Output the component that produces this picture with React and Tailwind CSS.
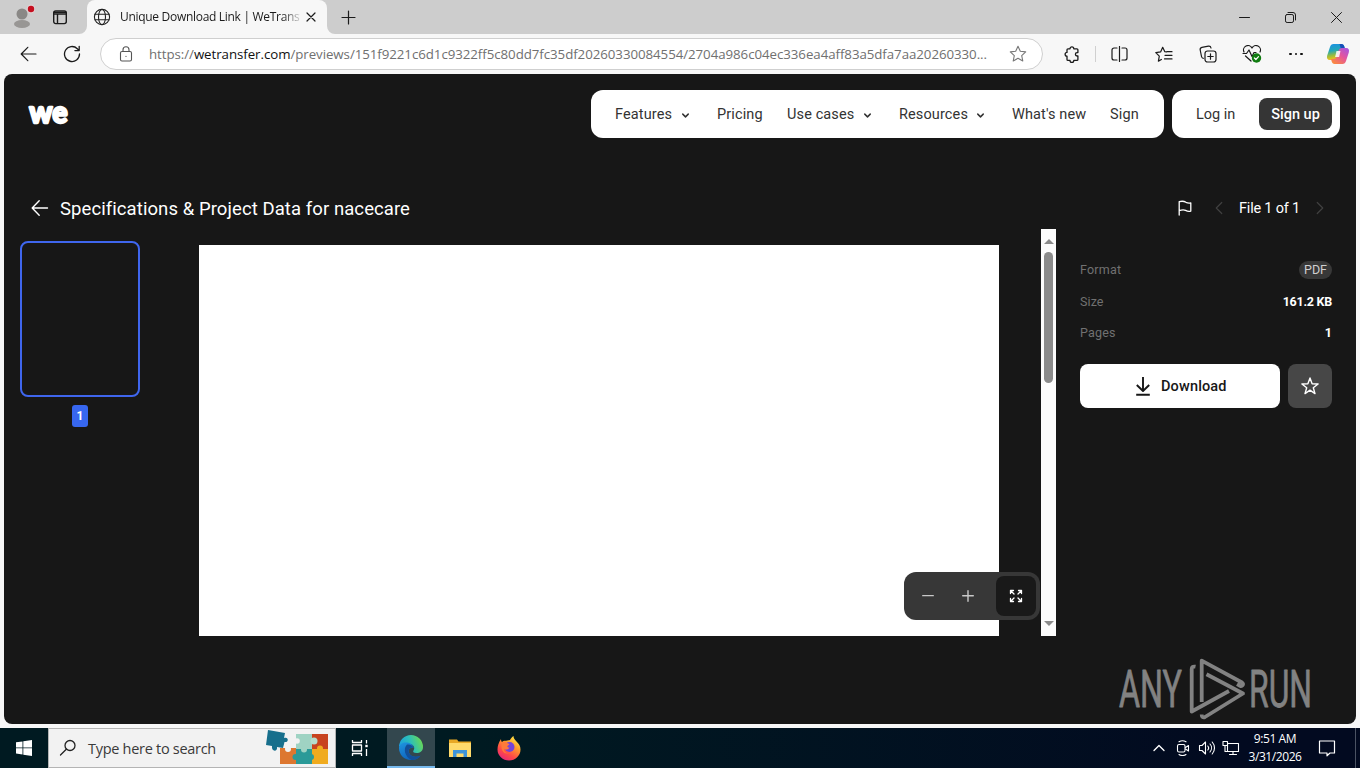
import React from 'react';
import { ChevronDown, ChevronLeft, ChevronRight, ChevronUp } from 'lucide-react';

const SEGOE = "font-['Open_Sans','Noto_Sans',sans-serif]";
const GROTESK = "font-['Roboto','Inter',sans-serif]";

// Thin line icon, one unit per pixel
function Line({ w = 20, h = 20, sw = 1.2, className = '', children }) {
  return (
    <svg
      width={w}
      height={h}
      viewBox={`0 0 ${w} ${h}`}
      fill="none"
      stroke="currentColor"
      strokeWidth={sw}
      strokeLinecap="round"
      strokeLinejoin="round"
      className={`shrink-0 ${className}`}
    >
      {children}
    </svg>
  );
}

function TabBar() {
  return (
    <div className="flex h-[34px] bg-[#cdcdcd] text-[#1b1b1b]">
      <div className="flex w-[43px] items-center justify-end pr-2">
        <svg width="26" height="26" viewBox="0 0 26 26">
          <circle cx="13" cy="10" r="5.5" fill="#8a8886" />
          <ellipse cx="13" cy="20" rx="8" ry="4" fill="#989694" />
          <circle cx="22" cy="5" r="4.4" fill="#e0d2d3" />
          <circle cx="22" cy="5" r="3.2" fill="#c50f1f" />
        </svg>
      </div>
      <div className="flex w-[44px] items-center pl-[9px]">
        <Line w={16} h={16} sw={1.4}>
          <rect x="1.7" y="2" width="12.6" height="12.6" rx="2" />
          <path d="M2 3.4h12M2 5h12M5.5 5v9" />
        </Line>
      </div>
      <div className="relative flex w-[240px] items-center rounded-t-lg bg-[#f7f7f7]">
        <svg className="absolute bottom-0 -left-2" width="8" height="8" viewBox="0 0 8 8">
          <path d="M8 0v8H0a8 8 0 0 0 8-8z" fill="#f7f7f7" />
        </svg>
        <svg className="absolute -right-2 bottom-0" width="8" height="8" viewBox="0 0 8 8">
          <path d="M0 0v8h8a8 8 0 0 1-8-8z" fill="#f7f7f7" />
        </svg>
        <Line w={18} h={18} sw={1.1} className="ml-[6px] text-[#222]">
          <circle cx="9" cy="9" r="7.6" />
          <ellipse cx="9" cy="9" rx="3.5" ry="7.6" />
          <path d="M2 6.3h14M2 11.7h14" />
        </Line>
        <span
          className={`${SEGOE} ml-[9px] w-[180px] text-[12px] leading-5 tracking-[-0.3px] whitespace-nowrap mask-linear-90 mask-linear-from-90% mask-linear-to-102%`}
        >
          Unique Download Link | WeTransf
        </span>
        <Line w={10} h={10} className="ml-[6px]">
          <path d="M1 1l8 8M9 1l-8 8" />
        </Line>
      </div>
      <div className="flex flex-1 items-center pl-[14px]">
        <Line w={15} h={15} sw={1.2}>
          <path d="M7.5 1v13M1 7.5h13" />
        </Line>
      </div>
      <div className="flex w-[138px] items-center">
        <div className="flex w-[46px] justify-center">
          <Line w={12} h={11} sw={1}>
            <path d="M.5 5.5h10" />
          </Line>
        </div>
        <div className="flex w-[46px] justify-center">
          <Line w={12} h={11} sw={1}>
            <rect x=".5" y="2.5" width="8" height="8" rx="1.6" />
            <path d="M3 .5h5a2.5 2.5 0 0 1 2.5 2.5v5" />
          </Line>
        </div>
        <div className="flex w-[46px] justify-center">
          <Line w={12} h={11} sw={1}>
            <path d="M.5.5l10 10M10.5.5l-10 10" />
          </Line>
        </div>
      </div>
    </div>
  );
}

function CopilotLogo() {
  return (
    <svg width="24" height="24" viewBox="0 0 24 24">
      <defs>
        <linearGradient id="cpA" x1="0" y1="0" x2="0.2" y2="1">
          <stop offset="0" stopColor="#1b8fe8" />
          <stop offset="0.45" stopColor="#22a7b8" />
          <stop offset="0.75" stopColor="#9bbd3c" />
          <stop offset="1" stopColor="#f5c01b" />
        </linearGradient>
        <linearGradient id="cpB" x1="1" y1="0" x2="0.2" y2="1">
          <stop offset="0" stopColor="#9f55e8" />
          <stop offset="0.5" stopColor="#e5549c" />
          <stop offset="1" stopColor="#fb8b3f" />
        </linearGradient>
      </defs>
      <path d="M7.5 2h8c1.6 0 2.3 1 2.8 2.5L19 7h-2.5c-1.8 0-2.9 1-3.4 2.7l-1.7 5.5C10.8 17 9.8 18 8 18H4c-2.7 0-3.5-2-2.8-4.5L4 5c.6-2 1.7-3 3.5-3z" fill="url(#cpA)" />
      <path d="M13.5 2h2c1.6 0 2.3 1 2.8 2.5L19 7h-4z" fill="#174fb8" />
      <path d="M16.5 22h-8c-1.6 0-2.3-1-2.8-2.5L5 17h2.5c1.8 0 2.9-1 3.4-2.7l1.7-5.5C13.2 7 14.2 6 16 6h4c2.7 0 3.5 2 2.8 4.5L20 19c-.6 2-1.7 3-3.5 3z" fill="url(#cpB)" />
      <path d="M10.5 9h4l-1.4 6h-4z" fill="#fff" opacity=".85" />
    </svg>
  );
}

function Toolbar() {
  return (
    <div className="flex h-10 items-center bg-[#f7f7f7] text-[#1b1b1b]">
      <div className="flex w-[50px] justify-end pr-[13px]">
        <Line w={17} h={16} sw={1.2}>
          <path d="M16 8H1.2M7.8 1.3L1.2 8l6.6 6.7" />
        </Line>
      </div>
      <div className="flex w-[50px] pl-[13px]">
        <Line w={18} h={18} sw={1.3}>
          <path d="M16.5 9A7.5 7.5 0 1 1 14.3 3.7L16 5.4M16.2 1.3v4.3h-4.3" />
        </Line>
      </div>
      <div className="flex h-8 w-[943px] items-center rounded-full border border-[#cfcfcf] bg-white">
        <Line w={14} h={16} sw={1.1} className="ml-[18px] text-[#555]">
          <rect x="1.5" y="5.5" width="11" height="9.5" rx="1.5" />
          <path d="M4 5.5V3.8a3 3 0 0 1 6 0v1.7M7 10.2v.2" />
        </Line>
        <span
          className={`${SEGOE} ml-[16px] w-[842px] pt-px text-[13.3px] tracking-[-0.06px] whitespace-nowrap text-[#707070]`}
        >
          https://<span className="text-[#111]">wetransfer.com</span>
          /previews/151f9221c6d1c9322ff5c80dd7fc35df20260330084554/2704a986c04ec336ea4aff83a5dfa7aa20260330...
        </span>
        <Line w={18} h={18} sw={1.1} className="ml-[18px] text-[#777]">
          <path d="M9 1.3l2.3 5 5.4.6-4 3.7 1.1 5.4L9 13.3 4.2 16l1.1-5.4-4-3.7 5.4-.6z" />
        </Line>
      </div>
      <div className="flex w-[52px] justify-end pr-[15px]">
        <Line w={16} h={17} sw={1.3}>
          <path d="M4 2.8H6a1.9 1.9 0 0 1 3.8 0H12.9a1 1 0 0 1 1 1V6.6h-.8a1.7 1.7 0 0 0 0 3.4h.8V13.400a1 1 0 0 1-1 1H9.800a1.900 1.900 0 0 1-3.800 0H4a1 1 0 0 1-1-1v-3.200a1.900 1.900 0 0 1 0-3.800V3.800a1 1 0 0 1 1-1z" />
        </Line>
      </div>
      <div className="h-4 w-px bg-[#d0d0d0]" />
      <div className="flex w-[46px] justify-center">
        <Line w={17} h={16}>
          <path d="M6 2H3a2 2 0 0 0-2 2v8a2 2 0 0 0 2 2h3M11 2h3a2 2 0 0 1 2 2v8a2 2 0 0 1-2 2h-3M8.5.5v15" />
        </Line>
      </div>
      <div className="flex w-[44px] justify-center">
        <Line w={18} h={17}>
          <path d="M11.5 6L9.8 5.7 7.7 1.3 5.6 5.9.8 6.6l3.5 3.5-.9 5 3-1.6M11.8 5.7h5.2M10 9.3h7M9.5 12.9H17" />
        </Line>
      </div>
      <div className="flex w-[44px] justify-center">
        <Line w={18} h={18}>
          <rect x="6" y="6" width="11" height="11" rx="2.5" />
          <path d="M11.5 8.8v5.4M8.8 11.5h5.4M4.3 13.3A2.3 2.3 0 0 1 2.5 11.5L1.2 5a2.3 2.3 0 0 1 1.7-2.7l6.5-1.2A2.3 2.3 0 0 1 12 3" />
        </Line>
      </div>
      <div className="flex w-[44px] justify-center">
        <Line w={20} h={18}>
          <path d="M2 7a4.4 4.4 0 0 1 8-4 4.4 4.4 0 0 1 8 4M1 8.5h3.5L7 5l3 6.5 2-4h2M3.5 11l5.5 5" />
          <circle cx="14.5" cy="13" r="4.7" fill="#107c10" stroke="none" />
          <path d="M12.4 13l1.5 1.5 2.6-2.8" stroke="#fff" />
        </Line>
      </div>
      <div className="flex w-[44px] justify-center gap-[3px]">
        <span className="size-[2.5px] rounded-full bg-[#111]" />
        <span className="size-[2.5px] rounded-full bg-[#111]" />
        <span className="size-[2.5px] rounded-full bg-[#111]" />
      </div>
      <div className="flex w-[40px] justify-center">
        <CopilotLogo />
      </div>
    </div>
  );
}

function NavItem({ label, width, menu }) {
  return (
    <div className="flex items-center gap-1">
      <span className={`${width} pt-[2px] whitespace-nowrap`}>{label}</span>
      {menu && (
        <span className="flex w-4 justify-center pt-[3px] pl-px">
          <ChevronDown size={11} strokeWidth={3.2} />
        </span>
      )}
    </div>
  );
}

function SiteHeader() {
  return (
    <div className={`${GROTESK} flex h-12 items-center gap-2 pr-4 pl-[23px] text-[14.5px] tracking-[0.12px] text-[#333]`}>
      <svg width="46" height="32" viewBox="0 0 46 32" className="mr-auto overflow-visible">
        <text
          x="2.2"
          y="24.6"
          textLength="38.5"
          lengthAdjust="spacingAndGlyphs"
          fill="#fff"
          stroke="#fff"
          strokeWidth="2.3"
          strokeLinejoin="round"
          fontFamily="Lato, sans-serif"
          fontWeight="900"
          fontSize="30"
        >
          we
        </text>
      </svg>
      <nav className="flex h-12 w-[573px] items-center gap-6 rounded-xl bg-white pl-6">
        <NavItem label="Features" width="w-[58px]" menu />
        <NavItem label="Pricing" width="w-[46px]" />
        <NavItem label="Use cases" width="w-[68px]" menu />
        <NavItem label="Resources" width="w-[69px]" menu />
        <NavItem label="What's new" width="w-[74px]" />
        <NavItem label="Sign" width="w-[30px]" />
      </nav>
      <div className="flex h-12 w-[168px] items-center rounded-xl bg-white pl-6">
        <span className="w-[63px] pt-[2px] tracking-normal whitespace-nowrap">Log in</span>
        <button className="h-8 w-[73px] rounded-lg bg-[#353535] pt-px font-medium tracking-normal whitespace-nowrap text-white">
          Sign up
        </button>
      </div>
    </div>
  );
}

function TitleRow() {
  return (
    <div className={`${GROTESK} mt-[54px] flex h-8 items-center text-white`}>
      <Line w={18} h={18} sw={1.4} className="ml-[27px]">
        <path d="M16.5 9H1.5M8.2 1.8L1.2 9l7 7.2" />
      </Line>
      <h1 className="ml-[11px] pt-[3px] text-[18.5px] tracking-[0.08px] whitespace-nowrap">
        Specifications &amp; Project Data for nacecare
      </h1>
      <Line w={14} h={16} sw={1.3} className="ml-auto">
        <path d="M1.2 15V1.7C4.5.7 6.2 1.2 8 2.3c1.8.9 3 .9 4.8.6v8.2c-1.8.5-3.6.2-5.2-.7C5.5 9.4 3.5 9.9 1.2 10.6" />
      </Line>
      <ChevronLeft size={22} strokeWidth={1.3} className="ml-4 text-[#404040]" />
      <span className="ml-[9px] w-[61px] pt-[2px] text-[14.5px] tracking-[-0.2px] whitespace-nowrap">File 1 of 1</span>
      <ChevronRight size={22} strokeWidth={1.3} className="mr-[25px] ml-[9px] text-[#404040]" />
    </div>
  );
}

function Thumbnails() {
  return (
    <div className="flex w-[136px] flex-col items-end pt-3">
      <div className="h-[156px] w-[120px] rounded-lg border-2 border-[#3f66ee]" />
      <div className="mt-2 mr-[52px] flex h-[22px] w-4 items-center justify-center rounded-[3px] bg-[#3767f0] text-[12px] font-bold text-white">
        1
      </div>
    </div>
  );
}

function Viewer() {
  return (
    <div className="relative flex w-[916px]">
      <div className="mt-4 ml-[59px] h-[391px] w-[800px] bg-white" />
      <div className="ml-[42px] flex w-[15px] flex-col items-center bg-[#fcfcfc]">
        <div className="mt-[10px] h-0 w-0 border-x-[5px] border-b-[5px] border-x-transparent border-b-[#8b8b8b]" />
        <div className="mt-2 h-[131px] w-[9px] rounded-full bg-[#8b8b8b]" />
        <div className="mt-auto mb-[10px] h-0 w-0 border-x-[5px] border-t-[5px] border-x-transparent border-t-[#8b8b8b]" />
      </div>
      <div className="absolute right-4 bottom-4 flex h-12 w-[136px] items-center rounded-xl bg-[#373737] pl-1 text-[#c8c8c8]">
        <div className="flex size-10 items-center justify-center">
          <Line w={12} h={12} sw={1.3}>
            <path d="M.7 5.7h10.6" />
          </Line>
        </div>
        <div className="flex size-10 items-center justify-center">
          <Line w={12} h={12} sw={1.4}>
            <path d="M.7 5.7h10.6M6 .7v10.6" />
          </Line>
        </div>
        <div className="ml-2 flex size-10 items-center justify-center rounded-lg bg-[#191919] text-white">
          <Line w={14} h={14} sw={1.3}>
            <path d="M1.5 4.5v-3h3M1.5 1.5L5 5M9.5 1.5h3v3M12.5 1.5L9 5M1.5 9.5v3h3M1.5 12.5L5 9M9.5 12.5h3v-3M12.5 12.5L9 9" />
          </Line>
        </div>
      </div>
    </div>
  );
}

function Details() {
  return (
    <div className="ml-6 w-[252px] pt-[33px] text-[12.5px] leading-4">
      <div className="flex h-4 items-center justify-between text-[#717171]">
        <span className="tracking-[0.2px]">Format</span>
        <span className="flex h-[18px] w-[33px] items-center justify-center rounded-full bg-[#383838] text-[12.5px] text-[#cfcfcf]">
          PDF
        </span>
      </div>
      <div className="mt-4 flex h-4 items-center justify-between text-[#717171]">
        <span className="tracking-[0.1px]">Size</span>
        <span className="font-bold tracking-[-0.25px] text-white">161.2 KB</span>
      </div>
      <div className="mt-[15px] flex h-4 items-center justify-between text-[#717171]">
        <span className="tracking-[0.2px]">Pages</span>
        <span className="font-bold text-white">1</span>
      </div>
      <div className="mt-[23px] flex gap-2">
        <button className="flex h-11 w-[200px] items-center rounded-lg bg-white pl-[54px] text-[14.5px] font-medium text-[#171717]">
          <Line w={18} h={20} sw={1.9}>
            <path d="M9 1v13.5M2.8 9L9 15l6.2-6M2.2 18.8h13.6" strokeLinecap="butt" />
          </Line>
          <span className="ml-[9px] pt-[2px] tracking-[0.15px]">Download</span>
        </button>
        <button className="flex size-11 items-center justify-center rounded-lg bg-[#474747] text-white">
          <Line w={20} h={20} sw={1.4}>
            <path d="M10 2l2.1 5.8 6 .2-4.8 3.7 1.7 5.9-5-3.4-5 3.4 1.7-5.9L1.9 8l6-.2z" />
          </Line>
        </button>
      </div>
    </div>
  );
}

function Watermark() {
  return (
    <svg
      width="200"
      height="64"
      viewBox="0 0 200 64"
      className="absolute right-[38px] bottom-[3px] overflow-visible"
      fill="none"
      stroke="#828282"
      strokeWidth="3.8"
      strokeLinejoin="round"
      strokeLinecap="butt"
    >
      <g fill="#828282" strokeWidth="0.8" fontFamily="Roboto, sans-serif" fontSize="52" fontWeight="400">
        <text x="1" y="50" textLength="63" lengthAdjust="spacingAndGlyphs">ANY</text>
        <text x="131" y="50" textLength="63" lengthAdjust="spacingAndGlyphs">RUN</text>
      </g>
      <path d="M77.5 9.7C75 9.2 73.7 10 73.7 12v42.500l37.300-20.500" />
      <path d="M83.7 45V3.7L124 25.5c2.5 1.7 0 4.3-2 3.3l-3-1.7" />
      <path d="M88.5 17.2L125 36.5 87 60c-2 1-3.300 0-3.300-2.500" />
    </svg>
  );
}

function PuzzleArt() {
  return (
    <svg width="66" height="38" viewBox="0 0 66 38">
      <path d="M17 19h17v16H17z" fill="#dd7730" />
      <path d="M33 5h16v15H33z" fill="#9fd3c3" />
      <path d="M49 5h16v15H49z" fill="#c8431f" />
      <path d="M33 20h16v15H33z" fill="#2a9a98" />
      <path d="M49 20h16v15H49z" fill="#f0ab1f" />
      <circle cx="41" cy="20.5" r="3" fill="#9fd3c3" />
      <circle cx="51" cy="12" r="3.5" fill="#b5dccc" />
      <circle cx="32.5" cy="28" r="3" fill="#2a9a98" />
      <circle cx="48" cy="28" r="3" fill="#2a9a98" />
      <circle cx="57" cy="19.5" r="3" fill="#f0ab1f" />
      <circle cx="25" cy="20" r="3" fill="#f2f2f2" />
      <circle cx="34" cy="12" r="2.8" fill="#f2f2f2" />
      <path d="M5 1l17 3-1 5c5-2 5 5 .5 4L20 19l-6-1c1 5-6 5-5-1l-6-1z" fill="#176f8c" />
    </svg>
  );
}

function EdgeLogo() {
  return (
    <svg width="26" height="26" viewBox="0 0 26 26">
      <defs>
        <linearGradient id="edA" x1="0" y1="0.6" x2="1" y2="0.3">
          <stop offset="0" stopColor="#1a9de0" />
          <stop offset="0.5" stopColor="#2cbfb8" />
          <stop offset="1" stopColor="#6fdb4c" />
        </linearGradient>
        <linearGradient id="edB" x1="0" y1="0" x2="0.5" y2="1">
          <stop offset="0" stopColor="#1f95df" />
          <stop offset="1" stopColor="#0e62bb" />
        </linearGradient>
      </defs>
      <path d="M1 12A12 12 0 0 1 25 12c0 4-3 6-6.5 6-3 0-4-1.2-3-2.5 2-3 0-6.5-4.5-6.5C6 9 2 10 1 12z" fill="url(#edA)" />
      <path d="M1 13C1 9.5 4.5 7.5 8 7.5c4.5 0 7.5 2.7 7.5 5.5-4-1-5.5 2-4.5 4.8 1.3 3.7 6.5 5.2 11.5 2.9C20 24 16.5 25 13 25 6 25 1 19.5 1 13z" fill="url(#edB)" />
      <path d="M9 9.5c-4 4-2.5 12 4.5 15.5 4 0 7.5-1.7 9-4.3-5 2.3-10.2.8-11.5-2.9-1-2.8.5-5.8 4.5-4.8C15 10.5 12 9 9 9.5z" fill="#124f99" />
    </svg>
  );
}

function FirefoxLogo() {
  return (
    <svg width="24" height="26" viewBox="0 0 24 26">
      <defs>
        <linearGradient id="ffA" x1="0.8" y1="0" x2="0.2" y2="1">
          <stop offset="0" stopColor="#fff04a" />
          <stop offset="0.35" stopColor="#ff9b2c" />
          <stop offset="0.7" stopColor="#ff4848" />
          <stop offset="1" stopColor="#e3247f" />
        </linearGradient>
      </defs>
      <path d="M4 4c0 1.2.3 2.4 1 3 1-1 2.5-1.5 4-1.2L13 5c1-2 2-3 3.5-4 0 2 1 3.5 3 5.5 2.3 2.3 4 4.5 4 8A11.5 11 0 0 1 .5 14.5C.5 11 1.5 8 4 4z" fill="url(#ffA)" />
      <circle cx="12.5" cy="12" r="5" fill="#7544d8" />
      <path d="M5 8c2-1.5 4-1.500 6 .5l1.500.5c-.5 1.200-1.500 1.200-2 2-.5 1.200 1 1.800 2 1.400-1 2.300-4 2.800-5.500 1.300-.3 2.500 2 4.500 5 4.500-5 1.500-9-3-7-10.200z" fill="#ff7a3a" />
    </svg>
  );
}

function Taskbar() {
  return (
    <div className={`${SEGOE} flex h-10 items-center bg-linear-to-r from-[#001a21] from-35% to-[#020a20] to-90% text-white`}>
      <div className="flex w-12 justify-center">
        <svg width="16" height="16" viewBox="0 0 16 16" fill="#fff">
          <path d="M0 2.3L6.5 1.4v6.1H0zM7.3 1.3L16 0v7.5H7.3zM0 8.3h6.5v6.2L0 13.6zM7.3 8.3H16V16l-8.7-1.2z" />
        </svg>
      </div>
      <div className="flex h-10 w-[288px] items-center border border-[#b4b4b4] bg-[#f2f2f2] text-[#3a3a3a]">
        <Line w={18} h={18} sw={1.3} className="ml-[10px] text-[#222]">
          <circle cx="11" cy="6.5" r="5" />
          <path d="M7.3 10.2L1.5 16" />
        </Line>
        <span className="ml-[11px] w-[129px] pt-[2px] text-[14.5px] tracking-[-0.29px] whitespace-nowrap">
          Type here to search
        </span>
        <div className="ml-auto pr-[6px]">
          <PuzzleArt />
        </div>
      </div>
      <div className="flex w-[51px] justify-center pr-[3px]">
        <Line w={18} h={18} sw={1.3}>
          <path d="M1.5 1v2.5h9V1M1.5 17v-2.5h9V17M15.5 1v3.5M15.5 10v7" strokeLinecap="butt" />
          <rect x="1.5" y="6" width="9" height="6" />
          <path d="M14.3 7h2.4" strokeWidth="2.4" strokeLinecap="butt" />
        </Line>
      </div>
      <div className="flex h-10 w-12 items-center justify-center border-b-2 border-[#76b9ed] bg-[#33474e] pt-px">
        <EdgeLogo />
      </div>
      <div className="flex w-[49px] justify-center">
        <svg width="22" height="20" viewBox="0 0 22 20">
          <path d="M0 1.5h8l1.5 2H22V18H0z" fill="#e8a825" />
          <path d="M0 5h22v14H0z" fill="#ffda6b" />
          <path d="M4 12h14v7h-3.5v-3.5h-7V19H4z" fill="#3e94d9" />
        </svg>
      </div>
      <div className="flex w-[49px] justify-center">
        <FirefoxLogo />
      </div>
      <div className="ml-auto flex h-10 items-center">
        <div className="flex w-6 justify-center">
          <ChevronUp size={20} strokeWidth={1.6} />
        </div>
        <div className="flex w-6 justify-center">
          <Line w={14} h={16} sw={1.1}>
            <rect x="1.5" y="4.5" width="7.5" height="7.5" rx="1.5" />
            <path d="M9.5 7.5L12.5 5.5v5.5l-3-2M3 1.8C5 .6 8 .6 10 1.8M3 14.5c2 1.2 5 1.2 7 0" />
          </Line>
        </div>
        <div className="flex w-6 justify-center">
          <Line w={18} h={16} sw={1.1}>
            <path d="M1.5 5.5h2.5L7.5 2v12L4 10.5H1.5zM9.8 6a3 3 0 0 1 0 4M12 4a6 6 0 0 1 0 8M14.2 2a9 9 0 0 1 0 12" />
          </Line>
        </div>
        <div className="flex w-6 justify-center">
          <Line w={18} h={16} sw={1.1}>
            <path d="M5.5 3.5h11v8h-11zM11 11.5v3M7.5 14.5h7M3 5.5v6h2" />
            <rect x="1" y="1.5" width="4.5" height="4" fill="#030d1f" />
          </Line>
        </div>
        <div className="w-[64px] text-center text-[12px] leading-[18px] tracking-[-0.42px] whitespace-nowrap">
          <div>9:51 AM</div>
          <div>3/31/2026</div>
        </div>
        <div className="flex w-[44px] justify-center pr-1">
          <Line w={18} h={18} sw={1.2}>
            <path d="M1.5 2h15v12h-4.5L9 16.8V14H1.5z" />
          </Line>
        </div>
        <div className="ml-1 h-10 w-[5px] border-l border-[#4b5363]" />
      </div>
    </div>
  );
}

export default function App() {
  return (
    <div className="flex h-[768px] w-[1360px] flex-col overflow-hidden bg-[#f7f7f7]">
      <TabBar />
      <Toolbar />
      <main className="relative mx-1 mb-1 h-[650px] overflow-hidden rounded-lg bg-[#171717] pt-4">
        <SiteHeader />
        <TitleRow />
        <div className={`${GROTESK} mt-[5px] flex h-[407px]`}>
          <Thumbnails />
          <Viewer />
          <Details />
        </div>
        <Watermark />
      </main>
      <Taskbar />
    </div>
  );
}
